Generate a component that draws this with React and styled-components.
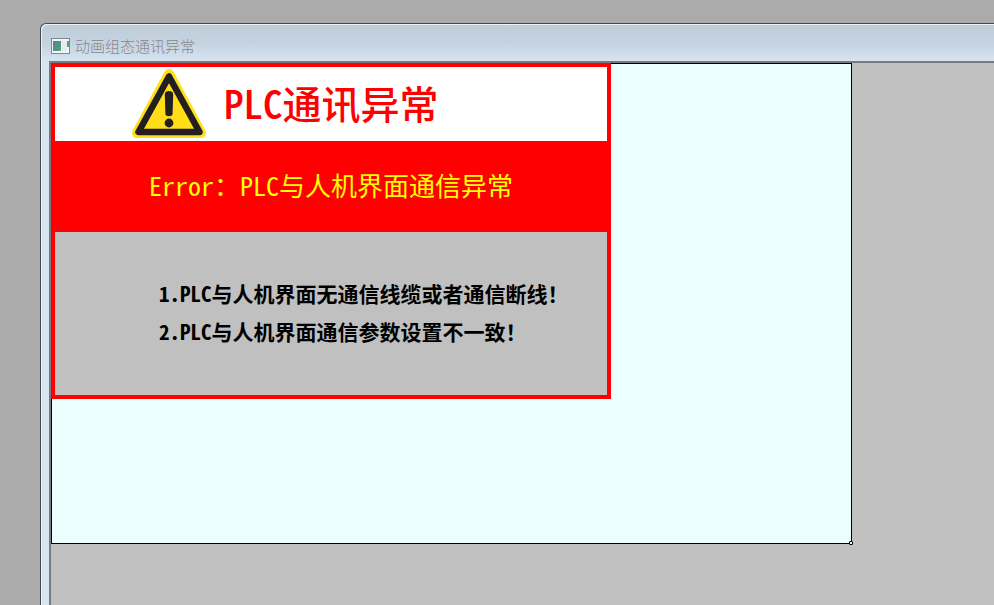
import styled, { createGlobalStyle } from "styled-components";

const GlobalStyle = createGlobalStyle`
  * {
    box-sizing: border-box;
  }
  body {
    margin: 0;
    background-color: #ababab;
    font-family: "Noto Sans CJK SC", sans-serif;
  }
`;

const Desktop = styled.div`
  min-height: 100vh;
  padding: 23px 0 0 40px;
  display: flex;
  overflow: hidden;
`;

const Window = styled.section`
  flex: 1;
  min-width: 0;
  display: flex;
  flex-direction: column;
  padding-left: 8px;
  border-top: 1px solid #45484d;
  border-left: 1px solid #45484d;
  border-top-left-radius: 6px;
  background-color: #d7e4f2;
  background-image: linear-gradient(#bfcddb, #c5d2df 50%, #d7e4f2);
  background-size: 100% 38px;
  background-repeat: no-repeat;
  box-shadow: inset 1px 1px 0 #edf3f9;
`;

const TitleBar = styled.header`
  height: 37px;
  padding-top: 6px;
  padding-left: 2px;
  display: flex;
  align-items: center;
  gap: 4px;
`;
const Caption = styled.h1`
  margin: 0;
  font-size: 15px;
  font-weight: 300;
  line-height: 20px;
  color: #85898e;
`;

const Client = styled.main`
  flex: 1;
  border-top: 2px solid #77797c;
  border-left: 2px solid #77797c;
  background-color: #c0c0c0;
  overflow: hidden;
`;

const Screen = styled.div`
  position: relative;
  width: 801px;
  height: 481px;
  border: 1px solid #000;
  background-color: #ebffff;
`;
const Handle = styled.span`
  position: absolute;
  right: -2px;
  bottom: -2px;
  width: 4px;
  height: 4px;
  border: 1px solid #000;
  border-radius: 1px;
  background-color: #fff;
`;

const Alarm = styled.article`
  width: 560px;
  margin: -1px 0 0 -1px;
  border: 4px solid #ff0000;
  background-color: #c0c0c0;
  font-feature-settings: "hwid";
`;
const AlarmHead = styled.div`
  height: 74px;
  padding: 2px 0 0 77px;
  display: flex;
  align-items: flex-start;
  gap: 18px;
  background-color: #fff;
`;
const AlarmTitle = styled.h2`
  margin: 0;
  font-size: 39px;
  font-weight: 500;
  line-height: 66px;
  color: #ff0000;
`;
const AlarmError = styled.p`
  margin: 0;
  height: 91px;
  padding-left: 94px;
  font-size: 26px;
  line-height: 88px;
  color: #ffff00;
  background-color: #ff0000;
`;
const Causes = styled.div`
  height: 163px;
  padding: 42px 0 0 104px;
`;
const Cause = styled.p`
  margin: 0;
  font-size: 21px;
  font-weight: 700;
  line-height: 38px;
  color: #000;
  white-space: nowrap;
`;

const causes = [
  "1.PLC与人机界面无通信线缆或者通信断线！",
  "2.PLC与人机界面通信参数设置不一致！",
];

const WindowIcon = () => (
  <svg width="20" height="16" viewBox="0 0 20 16" aria-hidden="true">
    <defs>
      <linearGradient id="pane" x1="0" y1="0" x2="1" y2="1">
        <stop offset="0" stopColor="#4c7f9e" />
        <stop offset="1" stopColor="#55a878" />
      </linearGradient>
    </defs>
    <rect x="0.5" y="0.5" width="18" height="15" fill="#f3f5f6" stroke="#7f868d" />
    <rect x="2" y="3" width="8" height="10" fill="url(#pane)" />
    <rect x="11" y="3" width="5" height="10" fill="#e9eaec" />
    <rect x="16" y="3" width="2" height="6" fill="#5c9a9a" />
  </svg>
);

const WarningIcon = () => (
  <svg width="74" height="70" viewBox="0 0 74 70" aria-hidden="true">
    <path
      d="M37 5 L5 64 H69 Z"
      fill="#ffe01a"
      stroke="#ffe01a"
      strokeWidth="10"
      strokeLinejoin="round"
    />
    <path
      d="M37 7.5 L6.5 63 H67.5 Z"
      fill="#ffde17"
      stroke="#231f20"
      strokeWidth="6.5"
      strokeLinejoin="round"
    />
    <path
      d="M32.8 25 C32.8 21 41.2 21 41.2 25 L40.6 45 C40.4 48 33.6 48 33.4 45 Z"
      fill="#231f20"
    />
    <circle cx="37" cy="54" r="4.4" fill="#231f20" />
  </svg>
);

const App = () => {
  return (
    <>
      <GlobalStyle />
      <Desktop>
        <Window>
          <TitleBar>
            <WindowIcon />
            <Caption>动画组态通讯异常</Caption>
          </TitleBar>
          <Client>
            <Screen>
              <Alarm>
                <AlarmHead>
                  <WarningIcon />
                  <AlarmTitle>PLC通讯异常</AlarmTitle>
                </AlarmHead>
                <AlarmError>Error：PLC与人机界面通信异常</AlarmError>
                <Causes>
                  {causes.map(item => (
                    <Cause key={item}>{item}</Cause>
                  ))}
                </Causes>
              </Alarm>
              <Handle />
            </Screen>
          </Client>
        </Window>
      </Desktop>
    </>
  );
};

export default App;
